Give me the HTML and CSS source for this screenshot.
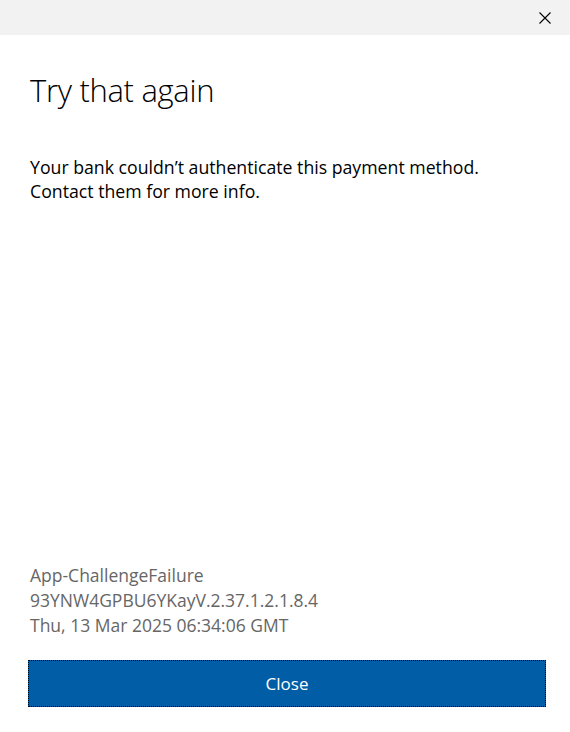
FILE: index.html
```html
<!DOCTYPE html>
<html lang="en">
<head>
<meta charset="utf-8">
<link rel="stylesheet" href="styles.css">
</head>
<body>
<div class="dialog">
  <div class="titlebar">
    <button class="close-x" aria-label="Close">
      <svg width="12" height="12" viewBox="0 0 12 12"><path d="M0.5 0.5 L11.5 11.5 M11.5 0.5 L0.5 11.5" stroke="#000" stroke-width="1.1" fill="none"/></svg>
    </button>
  </div>
  <div class="content">
    <h1 class="title">Try that again</h1>
    <p class="message">Your bank couldn’t authenticate this payment method.<br>Contact them for more info.</p>
    <div class="spacer"></div>
    <div class="details">
      <div>App-ChallengeFailure</div>
      <div>93YNW4GPBU6YKayV.2.37.1.2.1.8.4</div>
      <div>Thu, 13 Mar 2025 06:34:06 GMT</div>
    </div>
    <button class="primary">Close</button>
  </div>
</div>
</body>
</html>
```
FILE: styles.css
```css
html, body {
  margin: 0;
  padding: 0;
  background: #fff;
}
body {
  font-family: "Open Sans", "Noto Sans", sans-serif;
  color: #000;
}
.dialog {
  height: 732px;
  display: flex;
  flex-direction: column;
}
.titlebar {
  height: 35px;
  background: #f2f2f2;
  display: flex;
  justify-content: flex-end;
  align-items: center;
  flex-shrink: 0;
}
.close-x {
  border: 0;
  background: transparent;
  padding: 0;
  margin-right: 19px;
  margin-top: 1px;
  width: 12px;
  height: 12px;
  display: flex;
}
.content {
  flex: 1;
  display: flex;
  flex-direction: column;
  padding: 0 25px 25px 30px;
}
.title {
  font-weight: 300;
  font-size: 31px;
  line-height: 40px;
  margin: 35px 0 0 0;
  letter-spacing: -0.3px;
}
.message {
  font-size: 17.7px;
  line-height: 24px;
  margin: 45px 0 0 0;
}
.spacer {
  flex: 1;
}
.details {
  color: #666;
  font-size: 17.5px;
  line-height: 25px;
  margin-bottom: 22px;
}
.primary {
  height: 47px;
  margin-left: -2px;
  width: 518px;
  background: #005da6;
  color: #fff;
  border: 1px dotted #000;
  font-family: inherit;
  font-size: 17px;
  padding: 0;
}
```
